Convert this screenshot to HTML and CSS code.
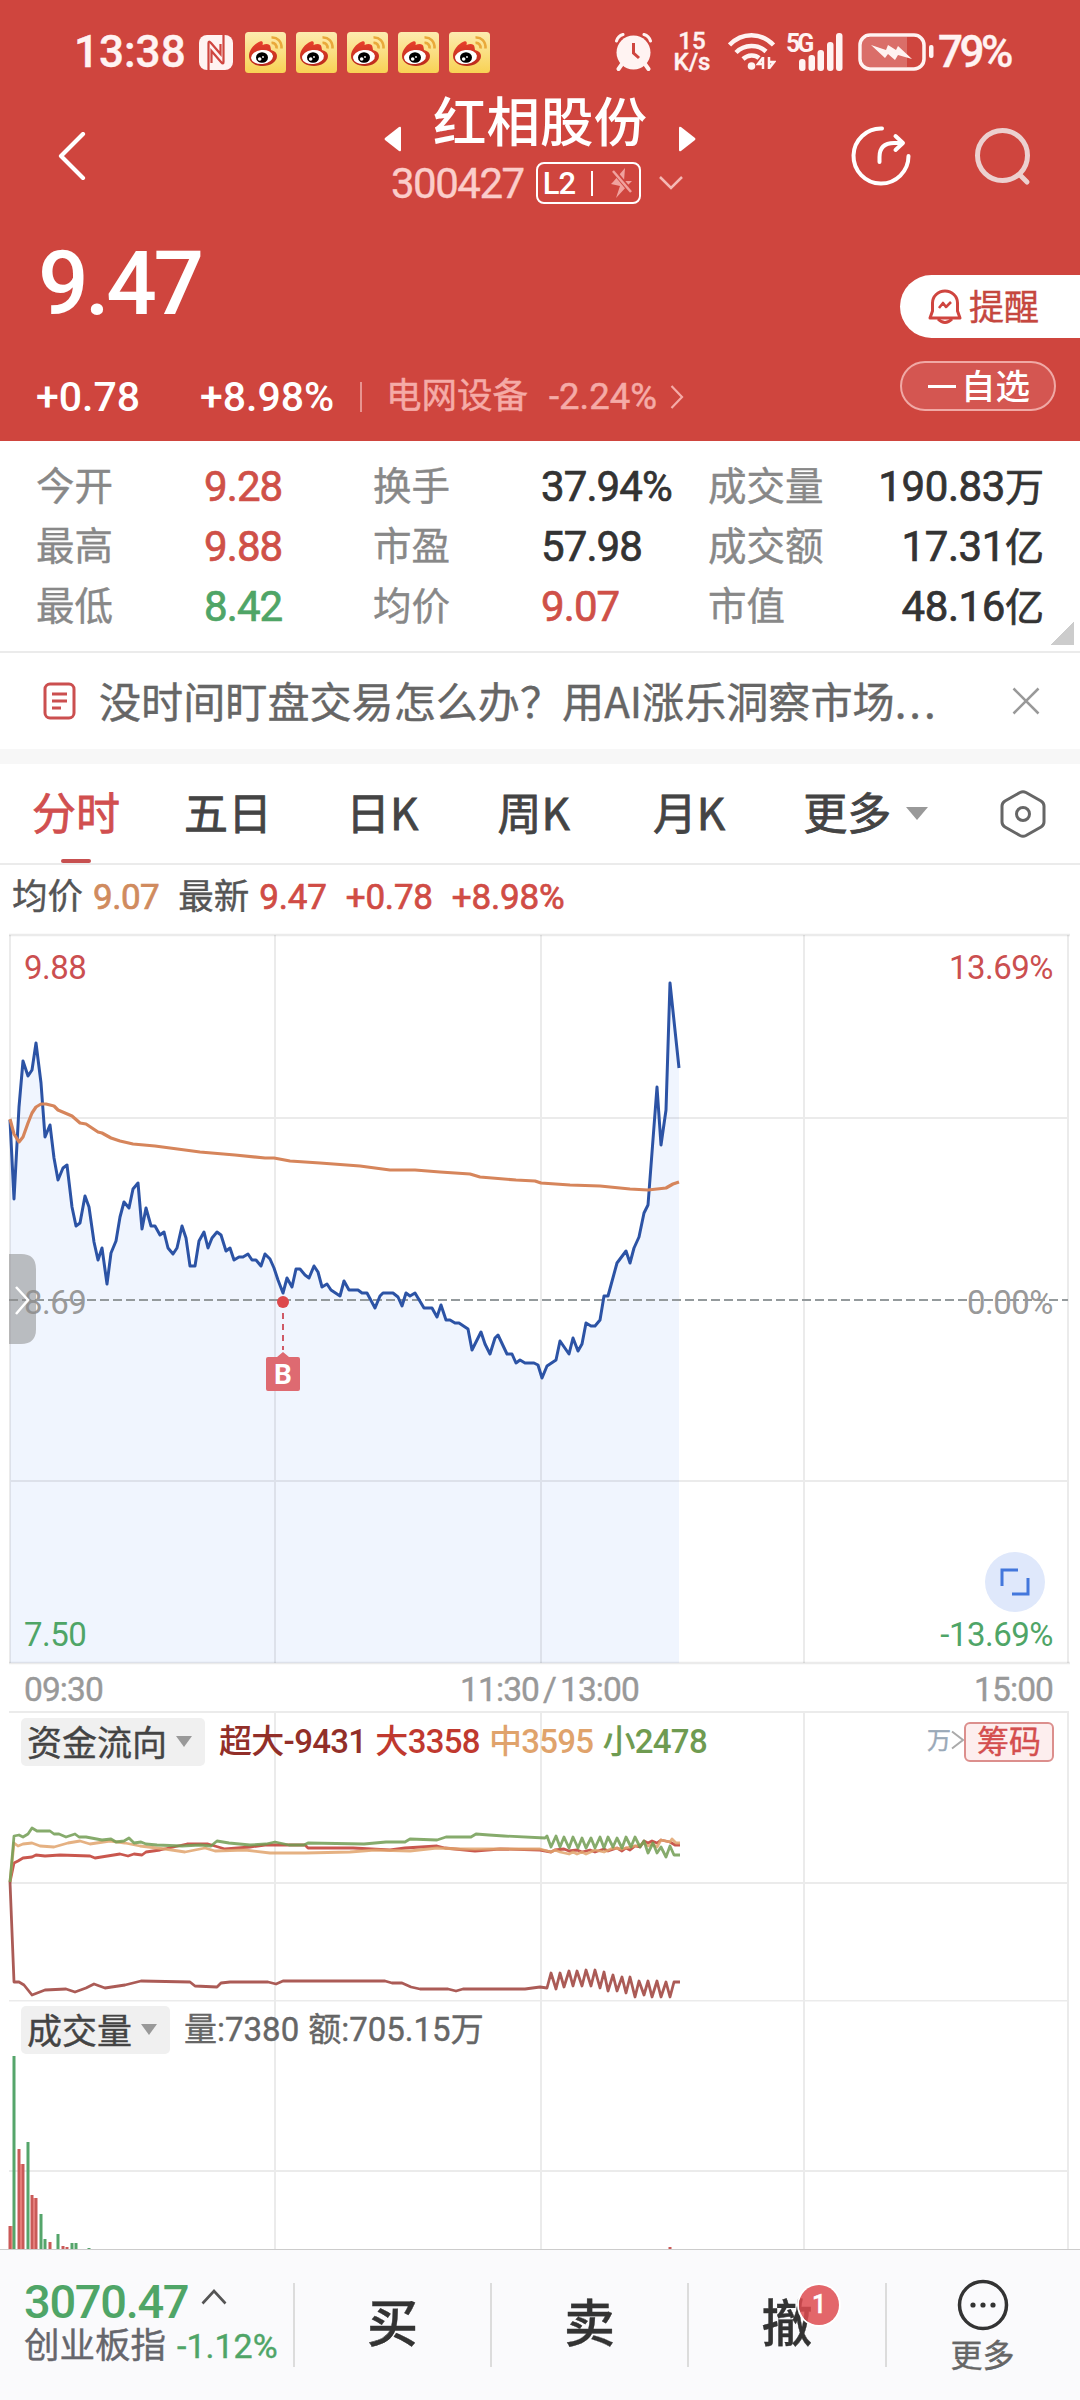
FILE: index.html
```html
<!DOCTYPE html>
<html lang="zh-CN">
<head>
<meta charset="utf-8">
<meta name="viewport" content="width=device-width, initial-scale=1.0">
<title>红相股份 300427</title>
<link rel="stylesheet" href="styles.css">
</head>
<body>
<!-- общие символы -->
<svg class="defs" width="0" height="0">
  <defs>
    <linearGradient id="wb-bg" x1="0" y1="0" x2="0" y2="1">
      <stop offset="0" stop-color="#fdebb0"/><stop offset="1" stop-color="#f8d254"/>
    </linearGradient>
    <linearGradient id="wb-red" x1="0" y1="0" x2="0" y2="1">
      <stop offset="0" stop-color="#e8402c"/><stop offset="1" stop-color="#b92a1c"/>
    </linearGradient>
    <symbol id="weibo" viewBox="0 0 41 41">
      <rect width="41" height="41" rx="3.5" fill="url(#wb-bg)"/>
      <path d="M4 24C4 18 9 12 15 9.5C17 8.500 18.500 9.500 17.500 13C21 11.500 25 11.500 25.500 15L26 18C30 19 32 21 32 24C32 30 25 34 18 34C10 34 4 30 4 24Z" fill="url(#wb-red)"/>
      <ellipse cx="17" cy="25" rx="11" ry="7" fill="#fff" transform="rotate(-7 17 25)"/>
      <ellipse cx="17" cy="25.500" rx="6" ry="5.300" fill="#000"/>
      <circle cx="14.700" cy="27" r="1.800" fill="#fff"/><circle cx="18" cy="25" r="0.900" fill="#fff"/>
      <path d="M26.500 5.500C32 5 37 9.500 36.500 16.500M26.500 11C29.500 10.500 32 13 31.500 16.500" fill="none" stroke="#e9a93b" stroke-width="2.600"/>
    </symbol>
  </defs>
</svg>

<header class="top">
  <div class="status">
    <span class="clock">13:38</span>
    <svg class="nfc" viewBox="0 0 34 35"><rect width="34" height="35" rx="8" fill="#fff3f2"/><path d="M9.500 35V8Q9.500 5 12 8L21.500 19V9M24.500 0V27Q24.500 30 22 27L12.500 16V28" fill="none" stroke="#cf453f" stroke-width="2.200"/></svg>
    <div class="apps">
      <svg><use href="#weibo"/></svg><svg><use href="#weibo"/></svg><svg><use href="#weibo"/></svg><svg><use href="#weibo"/></svg><svg><use href="#weibo"/></svg>
    </div>
    <svg class="alarm" viewBox="0 0 37 38"><g stroke="#fff3f2" fill="none" stroke-linecap="round"><path d="M1.500 8Q3 3 8 1.500M35.500 8Q34 3 29 1.500" stroke-width="3"/><path d="M7 31L3.500 36M30 31L33.500 36" stroke-width="4"/></g><circle cx="18.500" cy="19.500" r="17" fill="#fff3f2"/><path d="M18.500 10V20L24 25" fill="none" stroke="#cf453f" stroke-width="3"/></svg>
    <div class="speed"><span>15</span><span>K/s</span></div>
    <svg class="wifi" viewBox="0 0 48 38"><g fill="none" stroke="#fff3f2" stroke-width="4.500"><path d="M1.500 12C14 -1 33 -1 45.500 12"/><path d="M8 19.500C16.500 11 30 11 38 18.500"/><path d="M15 26C20 21.500 27 21.500 31 25"/></g><circle cx="23.500" cy="33" r="3.800" fill="#fff3f2"/><path d="M35 24V36M35 24.500L30 31H35M41 24V36M41 35.500L46 29H41" stroke="#fff3f2" stroke-width="2.500" fill="none"/></svg>
    <svg class="signal" viewBox="0 0 58 40"><text x="0" y="20" class="net">5G</text><g fill="#fff3f2"><rect x="13" y="27" width="6.500" height="12" rx="3"/><rect x="22.500" y="23" width="6.500" height="16" rx="3"/><rect x="31.500" y="18" width="6.500" height="21" rx="3"/><rect x="41" y="10" width="6.500" height="29" rx="3"/><rect x="50" y="1" width="6.500" height="38" rx="3"/></g></svg>
    <svg class="battery" viewBox="0 0 76 38"><path d="M12 4H49V34H12Q4 34 4 26V12Q4 4 12 4Z" fill="#da6e69"/><rect x="2" y="2" width="64" height="34" rx="10" fill="none" stroke="#fff3f2" stroke-width="3.500"/><rect x="71" y="12" width="4.500" height="13" rx="2" fill="#fff3f2"/><path d="M13 12L28 17L30 12L38 17L40 13L54 26L40 22L37 27L30 21L27 25Z" fill="#fff3f2"/></svg>
    <span class="percent">79%</span>
  </div>

  <nav class="titlebar">
    <svg class="back" viewBox="0 0 28 48"><path d="M25 2L3 24L25 46" fill="none" stroke="#fff" stroke-width="4.200" stroke-linecap="round" stroke-linejoin="round"/></svg>
    <div class="stock">
      <div class="stock-name">
        <svg width="18" height="26" viewBox="0 0 18 26"><path d="M17 2V24Q17 26 15 25L1 14Q0 13 1 12L15 1Q17 0 17 2Z" fill="#fff"/></svg>
        <h1>红相股份</h1>
        <svg width="18" height="26" viewBox="0 0 18 26"><path d="M1 2V24Q1 26 3 25L17 14Q18 13 17 12L3 1Q1 0 1 2Z" fill="#fff"/></svg>
      </div>
      <div class="stock-code">
        <span>300427</span>
        <div class="level"><b>L2</b><i></i><svg width="22" height="30" viewBox="0 0 22 30"><path d="M14 0L2 14L0 16L9 18L5 30L17 17L21 13H13Z" fill="#f0a29e"/><path d="M2 2L21 25" stroke="#cf453f" stroke-width="5"/><path d="M2 3L20 24" stroke="#f0a29e" stroke-width="2.500"/></svg></div>
        <svg class="down" viewBox="0 0 24 14"><path d="M1 1L12 12L23 1" fill="none" stroke="#f5b9b5" stroke-width="2.500"/></svg>
      </div>
    </div>
    <svg class="share" viewBox="0 0 60 60"><g fill="none" stroke="#fff" stroke-width="4" stroke-linecap="round" stroke-linejoin="round"><path d="M31 2.500A27.500 27.500 0 1 0 57.500 30"/><path d="M28.500 36V31Q28.500 17 43 17H51M44.500 10L52 17L44.500 24"/></g></svg>
    <svg class="search" viewBox="0 0 58 60"><g fill="none" stroke="#ecd0cf" stroke-width="5" stroke-linecap="round"><circle cx="28.500" cy="28.500" r="25"/><path d="M46 48L53 55"/></g></svg>
  </nav>

  <div class="quote">
    <div class="price">9.47</div>
    <button class="remind"><svg width="34" height="36" viewBox="0 0 34 36"><g fill="none" stroke="#cf453f" stroke-width="3" stroke-linejoin="round"><path d="M4.500 22V14A12.500 12 0 0 1 29.500 14V22L32 29H2Z"/><path d="M10 30Q17 37 24 30"/><path d="M11 19L15 14L18 18L23 13" stroke-width="2.600"/></g></svg><span>提醒</span></button>
    <div class="change"><span>+0.78</span><span>+8.98%</span><i></i><span class="sector">电网设备</span><span class="sector-pct">-2.24%</span><svg width="14" height="24" viewBox="0 0 14 24"><path d="M1.500 1L12 12L1.500 23" fill="none" stroke="#f5aba7" stroke-width="2.200"/></svg></div>
    <button class="watch"><i></i>自选</button>
  </div>
</header>

<section class="stats">
  <span>今开</span><b class="up">9.28</b><span>换手</span><b>37.94%</b><span>成交量</span><b class="end">190.83<em>万</em></b>
  <span>最高</span><b class="up">9.88</b><span>市盈</span><b>57.98</b><span>成交额</span><b class="end">17.31<em>亿</em></b>
  <span>最低</span><b class="down-c">8.42</b><span>均价</span><b class="up">9.07</b><span>市值</span><b class="end">48.16<em>亿</em></b>
  <div class="corner"></div>
</section>

<section class="notice">
  <svg width="34" height="38" viewBox="0 0 34 38"><rect x="2" y="2" width="29" height="34" rx="5" fill="none" stroke="#cb4f4f" stroke-width="3"/><path d="M9 12H24M9 19H24M9 26H18" stroke="#cb4f4f" stroke-width="2.800"/></svg>
  <p>没时间盯盘交易怎么办？用AI涨乐洞察市场<em>...</em></p>
  <svg width="28" height="28" viewBox="0 0 28 28"><path d="M1.500 1.500L26.500 26.500M26.500 1.500L1.500 26.500" stroke="#999" stroke-width="2.500"/></svg>
</section>

<nav class="tabs">
  <a class="active">分时</a><a>五日</a><a>日K</a><a>周K</a><a>月K</a><a>更多</a>
  <i class="caret"></i>
  <svg width="46" height="48" viewBox="0 0 46 48"><path d="M20 2.500Q23 1 26 2.500L41 11Q44 13 44 16V32Q44 35 41 37L26 45.500Q23 47 20 45.500L5 37Q2 35 2 32V16Q2 13 5 11Z" fill="none" stroke="#666" stroke-width="3"/><circle cx="23" cy="24" r="6.500" fill="none" stroke="#666" stroke-width="3"/></svg>
</nav>

<div class="legend"><span>均价</span><b class="avg">9.07</b><span>最新</span><b>9.47</b><b>+0.78</b><b>+8.98%</b></div>

<svg class="main-chart" viewBox="0 930 1080 735">
  <path d="M10 1120L14 1199L19 1107L23 1061L28 1076L32 1070L36 1043L41 1083L45 1137L50 1125L54 1158L58 1180L63 1168L67 1165L72 1207L76 1226L80 1223L85 1196L89 1207L94 1242L98 1260L102 1248L107 1284L111 1253L116 1241L120 1217L124 1202L129 1208L133 1189L138 1183L142 1229L146 1208L151 1226L155 1226L160 1235L164 1232L168 1248L173 1254L177 1248L182 1226L186 1238L190 1266L195 1266L199 1241L204 1232L208 1248L212 1238L217 1232L221 1235L226 1251L230 1248L234 1260L239 1257L243 1257L248 1254L252 1260L256 1260L261 1266L265 1254L270 1259L274 1268L278 1280L283 1293L287 1278L292 1287L296 1269L300 1269L305 1275L309 1278L314 1266L318 1272L322 1287L327 1284L331 1290L340 1296L344 1281L349 1290L358 1290L362 1293L367 1293L375 1308L380 1296L383 1293L393 1293L398 1297L402 1306L406 1293L410 1296L415 1293L424 1308L432 1308L437 1317L441 1305L446 1320L450 1320L455 1323L459 1323L468 1329L472 1350L481 1332L485 1344L490 1354L495 1338L498 1335L507 1354L512 1354L516 1363L520 1360L525 1363L534 1363L538 1365L542 1378L547 1366L556 1360L560 1341L569 1354L573 1338L578 1351L582 1344L586 1323L591 1326L595 1326L600 1320L604 1296L608 1296L617 1263L626 1251L630 1263L634 1248L639 1237L644 1213L648 1205L657 1087L661 1145L666 1110L670 983L679 1068V1663H10Z" fill="#f0f5fe"/>
  <g class="grid"><path d="M9 935H1070M9 1663H1070" stroke-width="2.600"/><path d="M10 1118H1068M10 1481H1068M10 935V1663M275 935V1663M541 935V1663M804 935V1663M1068 935V1663"/></g>
  <path d="M9 1300H1068" stroke="#949a9c" stroke-width="2" stroke-dasharray="9 4"/>
  <polyline class="line-price" points="10,1120 14,1199 19,1107 23,1061 28,1076 32,1070 36,1043 41,1083 45,1137 50,1125 54,1158 58,1180 63,1168 67,1165 72,1207 76,1226 80,1223 85,1196 89,1207 94,1242 98,1260 102,1248 107,1284 111,1253 116,1241 120,1217 124,1202 129,1208 133,1189 138,1183 142,1229 146,1208 151,1226 155,1226 160,1235 164,1232 168,1248 173,1254 177,1248 182,1226 186,1238 190,1266 195,1266 199,1241 204,1232 208,1248 212,1238 217,1232 221,1235 226,1251 230,1248 234,1260 239,1257 243,1257 248,1254 252,1260 256,1260 261,1266 265,1254 270,1259 274,1268 278,1280 283,1293 287,1278 292,1287 296,1269 300,1269 305,1275 309,1278 314,1266 318,1272 322,1287 327,1284 331,1290 340,1296 344,1281 349,1290 358,1290 362,1293 367,1293 375,1308 380,1296 383,1293 393,1293 398,1297 402,1306 406,1293 410,1296 415,1293 424,1308 432,1308 437,1317 441,1305 446,1320 450,1320 455,1323 459,1323 468,1329 472,1350 481,1332 485,1344 490,1354 495,1338 498,1335 507,1354 512,1354 516,1363 520,1360 525,1363 534,1363 538,1365 542,1378 547,1366 556,1360 560,1341 569,1354 573,1338 578,1351 582,1344 586,1323 591,1326 595,1326 600,1320 604,1296 608,1296 617,1263 626,1251 630,1263 634,1248 639,1237 644,1213 648,1205 657,1087 661,1145 666,1110 670,983 679,1068"/>
  <polyline class="line-avg" points="10,1119 14,1134 19,1142 23,1137 28,1123 32,1113 36,1107 41,1104 46,1104 54,1106 58,1110 72,1116 80,1123 86,1124 98,1132 102,1133 111,1138 120,1141 133,1144 155,1146 200,1152 235,1155 265,1158 274,1158 290,1161 320,1163 360,1166 390,1170 415,1170 440,1172 470,1174 480,1177 516,1180 535,1181 541,1183 570,1185 600,1186 630,1189 648,1190 666,1188 673,1184 679,1182"/>
  <!-- метка покупки -->
  <path d="M283 1313V1350" stroke="#cf5a66" stroke-width="2" stroke-dasharray="6 5"/>
  <circle cx="283" cy="1302" r="6" fill="#dd484b"/>
  <path d="M268 1357H277L283 1352L289 1357H298Q300 1357 300 1359V1389Q300 1391 298 1391H268Q266 1391 266 1389V1359Q266 1357 268 1357Z" fill="#de6a71"/>
  <text x="283" y="1384" class="mark">B</text>
  <!-- подписи осей -->
  <text x="24" y="979" class="axis red">9.88</text><text x="1053" y="979" class="axis red right">13.69%</text>
  <text x="24" y="1314" class="axis gray">8.69</text><text x="1053" y="1314" class="axis gray right">0.00%</text>
  <text x="24" y="1646" class="axis green">7.50</text><text x="1053" y="1646" class="axis green right">-13.69%</text>
  <path d="M9 1254H21Q36 1254 36 1269V1329Q36 1344 21 1344H9Z" fill="#8c8c8c" fill-opacity="0.550"/>
  <path d="M16 1287L28 1300L16 1314" fill="none" stroke="#fff" stroke-width="2.500"/>
  <circle cx="1015" cy="1582" r="30" fill="#dfe8fb"/>
  <path d="M1002 1586V1570H1018M1028 1578V1594H1012" fill="none" stroke="#4377dc" stroke-width="3"/>
</svg>

<div class="times"><span>09:30</span><span>11:30<i>/</i>13:00</span><span>15:00</span></div>

<section class="panel fund">
  <svg class="plot" viewBox="0 1711 1080 289">
    <path class="grid" d="M9 1712H1069M9 1883H1068M275 1712V2000M541 1712V2000M804 1712V2000M1068 1712V2000"/>
    <polyline class="flow" stroke="#c0392f" points="10,1882 14,1863 18,1861 23,1858 32,1857 36,1855 45,1856 60,1855 90,1856 95,1858 120,1854 128,1856 134,1854 142,1855 146,1852 160,1850 178,1846 187,1844 208,1844 225,1849 250,1847 265,1845 305,1845 308,1848 353,1848 390,1850 405,1848 437,1846 445,1848 475,1851 500,1849 540,1850 551,1852 555,1850 564,1849 569,1851 577,1850 582,1852 590,1850 595,1852 604,1849 608,1851 617,1848 622,1851 626,1848 630,1850 635,1846 640,1847 644,1841 648,1843 652,1841 657,1843 661,1840 670,1842 675,1845 680,1845"/>
    <polyline class="flow" stroke="#e0a36c" points="10,1882 14,1843 18,1846 23,1844 32,1843 40,1846 54,1847 68,1843 80,1841 90,1844 110,1841 125,1843 140,1846 165,1849 185,1852 205,1848 215,1851 245,1850 270,1853 305,1853 350,1852 375,1850 410,1851 437,1848 460,1849 540,1849 551,1852 555,1850 560,1852 569,1854 573,1852 577,1854 582,1852 586,1854 595,1850 604,1852 613,1848 622,1849 630,1847 640,1845 644,1843 648,1846 652,1844 657,1847 661,1840 670,1842 672,1839 676,1843 680,1843"/>
    <polyline class="flow" stroke="#719c52" points="10,1882 14,1836 19,1835 23,1837 28,1834 32,1828 37,1831 50,1831 54,1834 59,1834 66,1837 75,1834 79,1837 86,1837 102,1840 111,1839 116,1842 124,1841 129,1838 134,1843 141,1842 146,1844 157,1845 182,1846 200,1845 211,1846 217,1841 229,1843 250,1845 266,1844 275,1842 289,1845 304,1845 308,1843 364,1844 386,1842 405,1842 410,1839 437,1840 446,1837 471,1837 476,1834 489,1835 504,1836 545,1838 547,1836 551,1847 556,1836 560,1847 564,1837 569,1848 573,1837 578,1848 582,1838 586,1848 591,1838 595,1848 600,1837 604,1848 608,1837 613,1847 617,1838 622,1848 626,1837 631,1847 635,1837 640,1847 644,1841 648,1853 653,1843 657,1853 661,1847 666,1857 670,1846 674,1855 680,1855"/>
    <polyline class="flow" stroke="#9c3e38" points="10,1882 14,1982 19,1982 24,1985 32,1995 45,1990 66,1989 75,1992 86,1988 94,1984 105,1988 125,1985 141,1981 190,1982 195,1986 217,1987 221,1983 230,1982 268,1982 276,1984 283,1981 385,1981 392,1983 402,1983 411,1987 420,1989 448,1989 456,1991 463,1989 525,1989 540,1987 547,1988 551,1973 556,1989 560,1973 564,1987 569,1971 573,1986 577,1971 582,1986 586,1970 591,1986 595,1970 600,1988 604,1972 608,1991 613,1975 617,1991 622,1977 626,1993 630,1977 635,1997 639,1981 644,1995 648,1981 652,1997 657,1981 661,1997 666,1982 670,1997 674,1982 680,1982"/>
  </svg>
  <div class="panel-head">
    <button class="pick">资金流向<i class="caret"></i></button>
    <b class="xl">超大-9431</b><b class="lg">大3358</b><b class="md">中3595</b><b class="sm">小2478</b>
    <span class="unit">万</span>
    <svg class="more" width="13" height="20" viewBox="0 0 13 20"><path d="M1 1.500L12 10L1 18.500" fill="none" stroke="#aaa" stroke-width="2"/></svg>
    <button class="chips">筹码</button>
  </div>
</section>

<section class="panel volume">
  <svg class="plot" viewBox="0 2000 1080 249">
    <path class="grid" d="M9 2000.500H1069M9 2171H1068M275 2000V2249M541 2000V2249M804 2000V2249M1068 2000V2249"/>
    <path d="M12 2226V2249M21 2164V2249M34.500 2198V2249" stroke="#ff9c98" stroke-width="3"/>
    <path d="M10 2226V2249M19 2149V2249M23 2164V2249M32 2195V2249M36 2198V2249M50 2242V2249M63 2246V2249M67 2247V2249M670 2247V2249" stroke="#c95a58" stroke-width="3"/>
    <path d="M14 2056V2249M28 2142V2249M41 2214V2249M45 2239V2249M58 2234V2249M72 2243V2249M76 2243V2249M89 2248V2249" stroke="#55a56b" stroke-width="3"/>
  </svg>
  <div class="panel-head">
    <button class="pick">成交量<i class="caret"></i></button>
    <span class="vol">量:7380</span><span class="vol">额:705.15万</span>
  </div>
</section>

<footer class="bar">
  <div class="index">
    <div class="index-value">3070.47<svg width="26" height="16" viewBox="0 0 26 16"><path d="M1.500 14.500L13 2L24.500 14.500" fill="none" stroke="#555" stroke-width="2.600"/></svg></div>
    <div class="index-name">创业板指<b>-1.12%</b></div>
  </div>
  <a class="act">买</a>
  <a class="act">卖</a>
  <a class="act">撤<span class="badge">1</span></a>
  <a class="act menu"><svg width="52" height="52" viewBox="0 0 52 52"><circle cx="26" cy="26" r="23.500" fill="none" stroke="#333" stroke-width="3.500"/><g fill="#333"><circle cx="16" cy="26" r="2.600"/><circle cx="26" cy="26" r="2.600"/><circle cx="36" cy="26" r="2.600"/></g></svg>更多</a>
</footer>
</body>
</html>
```

FILE: styles.css
```css
* { box-sizing: border-box; }
body {
  margin: 0; width: 1080px; height: 2400px; overflow: hidden;
  background: #fff; color: #333;
  font-family: Roboto, "Noto Sans CJK SC", sans-serif;
  -webkit-text-stroke: 0.400px;
  display: flex; flex-direction: column;
}
svg { display: block; flex: none; }
.defs { position: absolute; }
h1, p { margin: 0; }
b { font-weight: 500; }
i, em { font-style: normal; }
button { border: 0; padding: 0; margin: 0; background: none; font-family: inherit; -webkit-text-stroke: 0.400px; }

.top { height: 441px; flex: none; background: #cf453e; color: #fff; }
.status { height: 104px; display: flex; align-items: center; padding-left: 74px; color: #fff3f2; white-space: nowrap; }
.clock { width: 125px; font-size: 44px; font-weight: 500; }
.nfc { width: 34px; height: 35px; }
.apps { display: flex; gap: 10px; margin-left: 12px; }
.apps svg { width: 41px; height: 41px; }
.alarm { width: 37px; height: 38px; margin-left: 125px; }
.speed { width: 42px; margin-left: 19px; display: flex; flex-direction: column; align-items: center; font-size: 24px; line-height: 21px; font-weight: 500; }
.wifi { width: 48px; height: 38px; margin-left: 15px; }
.signal { width: 58px; height: 40px; margin-left: 10px; overflow: visible; }
.net { font-size: 25px; font-weight: 700; fill: #fff3f2; letter-spacing: -3px; }
.battery { width: 76px; height: 38px; margin-left: 14px; }
.percent { margin-left: 4px; font-size: 44px; font-weight: 500; letter-spacing: -3.500px; }

.titlebar { height: 118px; display: flex; align-items: flex-start; padding-left: 58px; }
.back { width: 28px; height: 48px; margin-top: 28px; }
.stock { width: 312px; margin-left: 298px; }
.stock-name { height: 50px; display: flex; justify-content: space-between; }
.stock-name svg { margin-top: 22px; }
.stock-name h1 { font-size: 53.500px; line-height: 39px; font-weight: 500; -webkit-text-stroke: 0; }
.stock-code { height: 58px; display: flex; align-items: center; padding-left: 7px; font-size: 42px; letter-spacing: -1.500px; color: #fbcdca; }
.level { width: 105px; height: 42px; margin-left: 12px; padding-left: 5px; border: 2px solid #fff; border-radius: 8px; display: flex; align-items: center; color: #fff; }
.level b { font-size: 31px; width: 48px; letter-spacing: -1px; -webkit-text-stroke: 0; }
.level i { width: 2px; height: 25px; background: #fff; margin-right: 18px; }
.down { width: 24px; height: 14px; margin-left: 18px; }
.share { width: 60px; height: 60px; margin: 22px 0 0 155px; }
.search { width: 58px; height: 60px; margin: 23px 0 0 63px; }

.quote { height: 219px; display: grid; grid-template-columns: 900px 180px; grid-template-rows: 134px 85px; }
.price { padding-left: 38px; font-size: 89px; line-height: 124px; font-weight: 500; letter-spacing: -3.500px; -webkit-text-stroke: 0; }
.remind { width: 180px; height: 63px; margin-top: 53px; padding-left: 28px; display: flex; align-items: center; gap: 7px; background: #fff; border-radius: 32px 0 0 32px; color: #c5473f; font-size: 35px; }
.remind span { margin-top: -5px; }
.change { display: flex; align-items: center; padding: 0 0 3px 36px; font-size: 41px; font-weight: 500; line-height: 1; white-space: nowrap; -webkit-text-stroke: 0; }
.change span:nth-child(1) { width: 164px; }
.change span:nth-child(2) { width: 160px; }
.change i { width: 2px; height: 30px; background: #e89490; }
.change .sector { margin-left: 24px; width: 163px; font-size: 35.500px; font-weight: 400; color: #f5aba7; -webkit-text-stroke: 0.500px; }
.change .sector-pct { width: 121px; font-size: 36.500px; font-weight: 400; color: #f5aba7; -webkit-text-stroke: 0.500px; }
.watch { width: 156px; height: 50px; margin-top: 5px; padding: 0 0 4px 26px; display: flex; align-items: center; border: 2px solid #f0a9a5; border-radius: 25px; background: #d45651; color: #fff; font-size: 34.500px; font-weight: 500; -webkit-text-stroke: 0; }
.watch i { width: 28px; height: 3px; background: #fff; margin: 4px 5px 0 0; }

.stats { position: relative; height: 212px; flex: none; border-bottom: 2px solid #ebebeb; padding: 16px 36px 0; display: grid; grid-template-columns: 168px 169px 168px 167px 130px 206px; grid-template-rows: repeat(3, 60px); align-items: center; line-height: 60px; white-space: nowrap; }
.stats span { font-size: 38.500px; color: #888; }
.stats b { font-size: 42px; color: #333; letter-spacing: -0.900px; font-weight: 400; -webkit-text-stroke: 0.700px; }
.stats .end { text-align: right; letter-spacing: -0.400px; }
.stats em { font-size: 39px; letter-spacing: 0; }
.stats .up { color: #cf5048; }
.stats .down-c { color: #4fa567; }
.corner { position: absolute; right: 6px; bottom: 6px; width: 24px; height: 24px; background: linear-gradient(135deg, transparent 50%, #ccc 50%); }

.notice { height: 111px; flex: none; padding: 0 40px 0 43px; display: flex; align-items: center; border-bottom: 15px solid #f7f7f7; }
.notice p { flex: 1; margin: -3px 0 0 22px; font-size: 42.100px; line-height: 60px; color: #666; white-space: nowrap; font-family: "Noto Sans CJK SC", sans-serif; }
.notice em { letter-spacing: 3px; }

.tabs { height: 101px; flex: none; border-bottom: 2px solid #ebebeb; padding: 0 34px 0 32px; display: flex; align-items: center; font-size: 44px; color: #444; font-family: "Noto Sans CJK SC", sans-serif; -webkit-text-stroke: 0.800px; }
.tabs a { height: 100%; line-height: 95px; position: relative; margin-right: 64px; white-space: nowrap; }
.tabs a:nth-child(2) { margin-right: 74px; }
.tabs a:nth-child(3) { margin-right: 79px; }
.tabs a:nth-child(4) { margin-right: 83px; }
.tabs a:nth-child(5) { margin-right: 78px; }
.tabs a:nth-child(6) { margin-right: 15px; }
.tabs .active { color: #d14f4f; }
.tabs .active::after { content: ""; position: absolute; left: 29px; bottom: 0; width: 30px; height: 4px; border-radius: 2px; background: #c75050; }
.caret { width: 0; height: 0; border: solid transparent; border-width: 13px 11px 0; border-top-color: #999; }
.tabs svg { margin-left: auto; }

.legend { height: 65px; flex: none; display: flex; align-items: center; padding: 0 0 1px 12px; font-size: 35.500px; line-height: 40px; color: #555; white-space: nowrap; }
.legend b { font-size: 35px; padding-top: 1px; color: #d04c45; margin-left: 10px; letter-spacing: -0.200px; font-weight: 400; -webkit-text-stroke: 0.700px; }
.legend .avg { color: #d08b5e; margin-right: 19px; letter-spacing: -0.500px; }
.legend b + b { margin-left: 19px; }

.main-chart { width: 1080px; height: 735px; }
.grid { fill: none; stroke: #ebebeb; stroke-width: 2; }
.grid path { stroke: #000; stroke-opacity: 0.080; }
.line-price { fill: none; stroke: #2c53a5; stroke-width: 3; stroke-linejoin: round; }
.line-avg { fill: none; stroke: #d6855b; stroke-width: 3.200; stroke-linejoin: round; }
.axis { font-size: 33px; letter-spacing: -0.500px; }
.red { fill: #cb4f50; }
.green { fill: #4fa567; }
.gray { fill: #999; }
.right { text-anchor: end; }
.mark { font-size: 28px; font-weight: 700; fill: #fff; text-anchor: middle; }

.times { height: 46px; flex: none; display: flex; justify-content: space-between; align-items: center; padding: 2px 27px 0 24px; font-size: 33.500px; letter-spacing: -0.900px; color: #999; }
.times span:nth-child(2) { margin-left: 22px; }
.times i { margin: 0 4px; }

.panel { position: relative; flex: none; }
.fund { height: 289px; }
.volume { height: 249px; }
.plot { position: absolute; left: 0; top: 0; width: 1080px; height: 100%; }
.flow { fill: none; stroke-width: 2.800; stroke-linejoin: round; stroke-opacity: 0.850; }
.panel-head { position: relative; display: flex; align-items: center; height: 48px; margin: 0 26px 0 21px; top: 7px; font-size: 33px; line-height: 44px; white-space: nowrap; }
.volume .panel-head { top: 6px; }
.pick { height: 48px; margin-right: 14px; padding: 0 13px 4px 6px; display: flex; align-items: center; gap: 9px; background: #f0f0f0; border-radius: 5px; color: #444; font-size: 35px; }
.pick .caret { border-width: 11px 8px 0; margin-top: 3px; }
.panel-head b, .vol { margin-top: -1px; }
.panel-head b { margin-right: 9px; letter-spacing: -0.700px; -webkit-text-stroke: 0; }
.xl { color: #922f29; }
.lg { color: #c0392f; }
.md { color: #e0a36c; }
.sm { color: #6f9b51; }
.unit { margin: -2px 0 0 auto; font-size: 24px; color: #9aa9b8; }
.more { margin-top: -4px; }
.chips { width: 90px; height: 40px; border: 2px solid #dc8f8d; border-radius: 6px; background: #fdeeee; color: #d44f4f; font-size: 32px; line-height: 32px; }
.vol { color: #666; margin-right: 9px; }

.bar { height: 151px; flex: none; border-top: 1px solid #ccc; background: #fafafc; display: grid; grid-template-columns: 293px 197px 197px 198px 195px; position: relative; }
.index { padding: 29px 0 0 24px; white-space: nowrap; }
.index-value { display: flex; align-items: flex-start; gap: 13px; height: 46px; font-size: 47px; line-height: 46px; font-weight: 500; color: #4fa567; letter-spacing: -1.300px; -webkit-text-stroke: 0; }
.index-value svg { margin-top: 10px; }
.index-name { font-size: 35.500px; line-height: 42px; color: #66666c; }
.index-name b { margin-left: 11px; font-size: 34px; color: #4fa567; font-weight: 400; }
.act { position: relative; height: 84px; margin-top: 33px; border-left: 2px solid #dcdcdc; display: flex; align-items: center; justify-content: center; font-size: 51px; line-height: 84px; font-weight: 500; color: #333; }
.badge { position: absolute; left: 110px; top: 2px; width: 40px; height: 40px; border-radius: 50%; background: rgba(222, 75, 80, 0.850); color: #fff; font-size: 25px; line-height: 40px; text-align: center; box-shadow: 0 0 0 2px #fff; }
.menu { flex-direction: column; justify-content: flex-start; font-size: 32px; line-height: 51px; font-weight: 400; color: #666; padding-right: 2px; }
.menu svg { margin-top: -4px; }
```
